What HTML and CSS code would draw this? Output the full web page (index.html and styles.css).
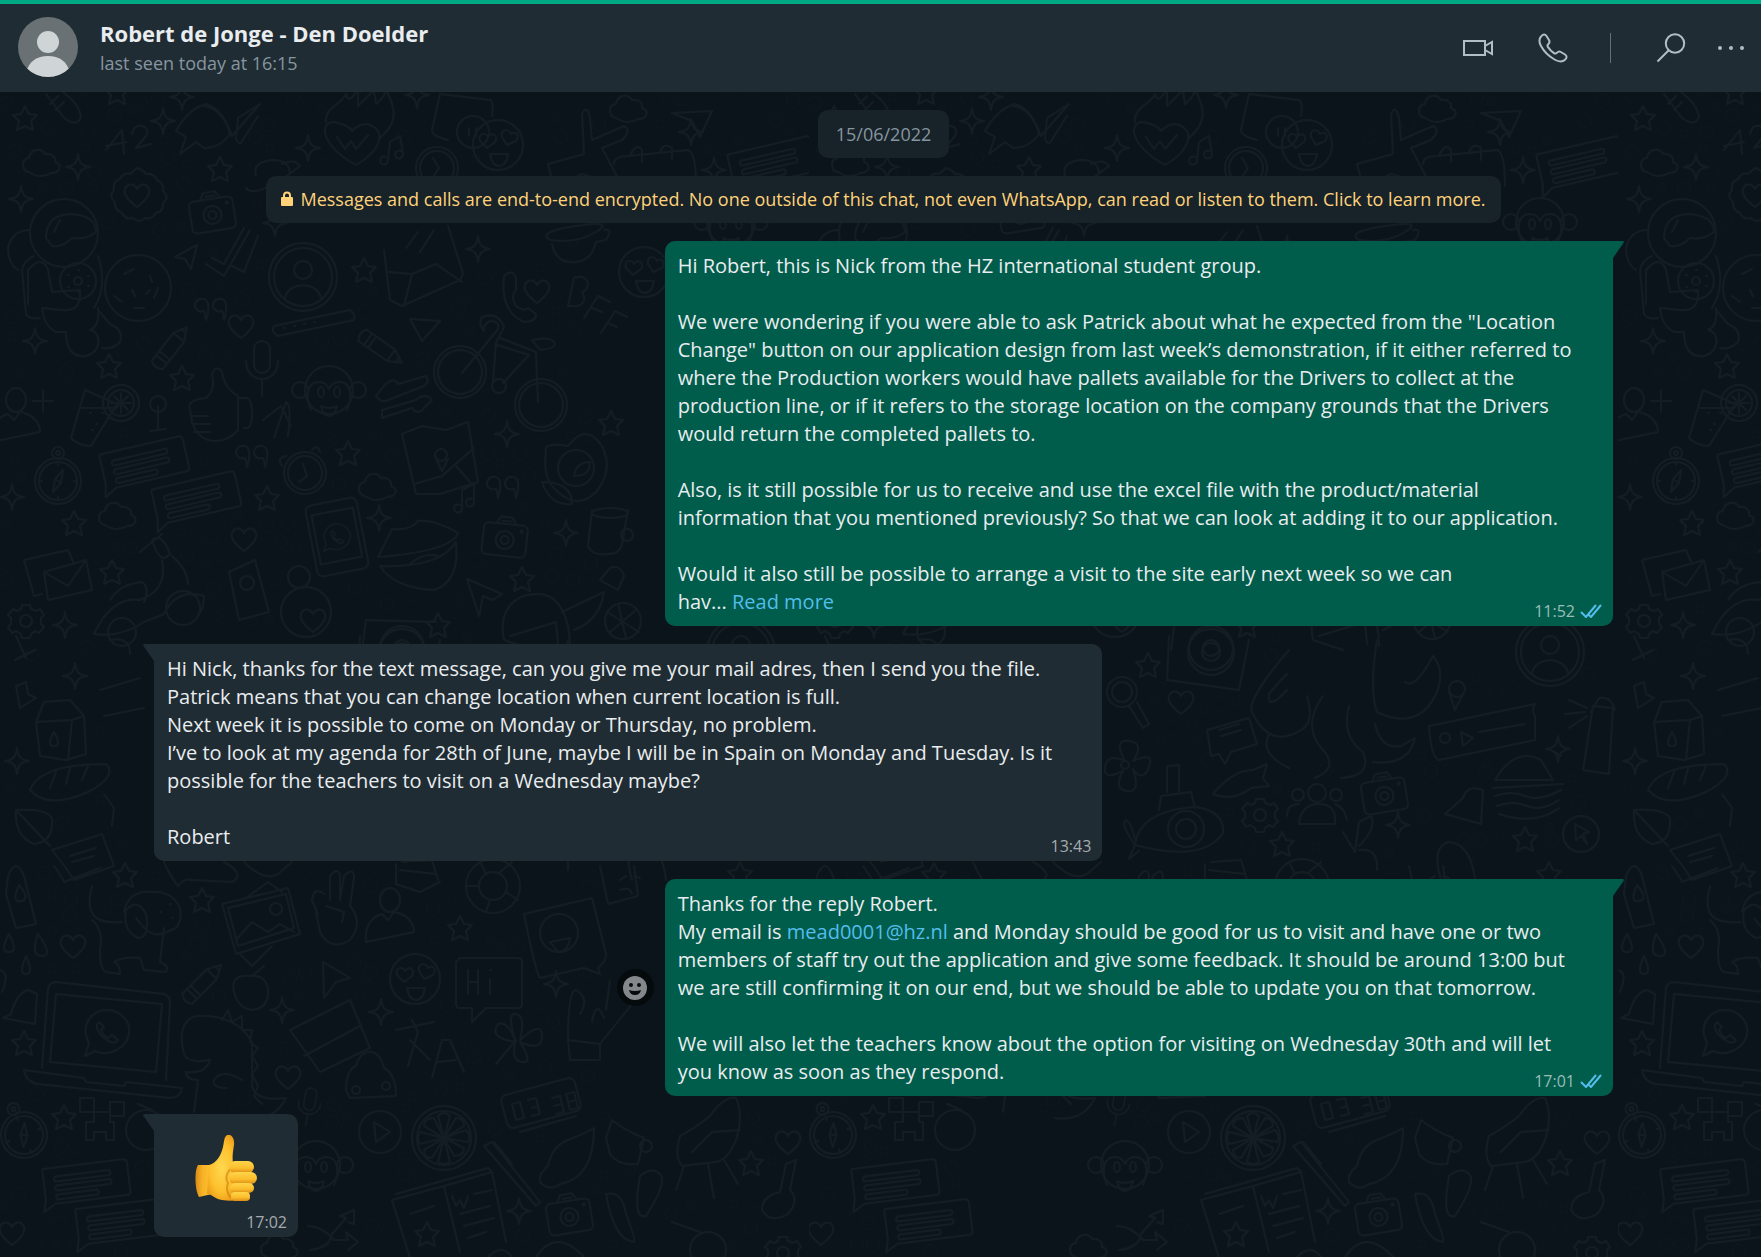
FILE: index.html
```html
<!DOCTYPE html>
<html lang="en">
<head>
<meta charset="utf-8">
<meta name="viewport" content="width=device-width, initial-scale=1">
<title>Robert de Jonge - Den Doelder</title>
<link rel="stylesheet" href="styles.css">
</head>
<body>
<div class="app">
  <header class="header">
    <svg class="avatar" viewBox="0 0 60 60" aria-hidden="true">
      <defs><clipPath id="avatar-clip"><circle cx="30" cy="30" r="30"/></clipPath></defs>
      <g clip-path="url(#avatar-clip)">
        <rect width="60" height="60" fill="#6a7175"/>
        <circle cx="30" cy="25" r="11" fill="#cfd4d6"/>
        <path d="M8 56C11 44 19 39 30 39s19 5 22 17v6H8z" fill="#cfd4d6"/>
      </g>
    </svg>
    <div class="contact">
      <h1 class="contact-name">Robert de Jonge - Den Doelder</h1>
      <p class="contact-status">last seen today at 16:15</p>
    </div>
    <div class="actions">
      <button class="action action-video" type="button" aria-label="Video call">
        <svg width="32" height="32" viewBox="0 0 32 32"><path d="M2 9h21v14H2zM23 14l7-4v12l-7-4"/></svg>
      </button>
      <button class="action action-phone" type="button" aria-label="Voice call">
        <svg width="32" height="32" viewBox="0 0 32 32"><path d="M4 4.500C6 2 8 1.800 9.500 4l2.600 4.200c.9 1.600.3 2.800-.9 4-1 1-.9 1.900 0 3.200 1.500 2.200 3.200 4 5.400 5.500 1.300.9 2.200 1 3.200 0 1.200-1.200 2.400-1.800 4-.9L28 22.500c2.200 1.500 2 3.500 0 5.300-2.500 2.300-6.500 2-10.500-.3C11.500 24 7 19.500 4 14 2 10.300 1.900 7 4 4.500z"/></svg>
      </button>
      <span class="divider"></span>
      <button class="action action-search" type="button" aria-label="Search">
        <svg width="32" height="32" viewBox="0 0 32 32"><circle cx="20" cy="11.500" r="9.200"/><path d="M13.500 18.500L2.500 29.500"/></svg>
      </button>
      <button class="action action-more" type="button" aria-label="More options">
        <svg width="32" height="32" viewBox="0 0 32 32"><g class="solid"><circle cx="5" cy="16" r="2"/><circle cx="16" cy="16" r="2"/><circle cx="27" cy="16" r="2"/></g></svg>
      </button>
    </div>
  </header>

  <main class="chat">
    <svg class="wallpaper" aria-hidden="true">
      <defs>
        <path id="star" d="M0-12L4-4l8 1-6 6 2 9-8-4-8 4 2-9-6-6 8-1z"/>
        <path id="spark" d="M0-13C1-4 4-1 12 0 4 1 1 4 0 13-1 4-4 1-12 0-4-1-1-4 0-13z"/>
        <path id="heart" d="M0 12C-8 6-14 0-12-6-10-12-3-12 0-6 3-12 10-12 12-6 14 0 8 6 0 12z"/>
        <path id="cloud" d="M-14 10c-8-2-8-13 0-14 1-9 12-11 16-4 8-1 11 4 10 8 8 3 5 11-4 11-6 4-14 4-22-1z"/>
        <g id="camera"><rect x="-22" y="-13" width="44" height="32" rx="5"/><path d="M-10-13l4-7H6l4 7M-4-16h9"/><circle cy="3" r="9"/><circle cy="3" r="4"/><circle cx="16" cy="-7" r="1"/></g>
        <g id="note"><path d="M-40-18h80q4 0 4 4v28q0 4-4 4h-72l-12 7 3-13v-26q0-4 1-4z"/><path d="M-29-9h54q3 2 0 5h-54q-3-2 0-5zM-29 0h54q3 2 0 5h-54q-3-2 0-5zM-29 9h40q3 2 0 5h-40q-3-2 0-5z"/></g>
        <path id="quote" d="M-4 9c-1-3 0-6-2-9-7 2-11-4-8-9s11-4 12 2-1 13-2 16zM14 9c-1-3 0-6-2-9-7 2-11-4-8-9s11-4 12 2-1 13-2 16z"/>
        <g id="profile"><circle r="34"/><circle r="29"/><circle cy="-7" r="9"/><path d="M-18 21C-14 4 14 4 18 21"/></g>
        <g id="gear"><circle r="6"/><path d="M-4-16h8l1 4 5 2 4-2 4 6-3 3v6l3 3-5 6-4-2-4 3-1 4h-8l-1-4-5-3-4 2-4-6 3-3v-6l-3-3 5-6 4 2 4-2z"/></g>
        <g id="compass"><circle r="23"/><circle r="19"/><circle cy="-28" r="6"/><circle cy="-28" r="2"/><path d="M5-11L3 2-5 11-3-2zM-3-2l6 4M0-19v3M0 16v3M-19 0h3M16 0h3"/></g>
        <g id="pencil"><path d="M-24-7h35l13 7-13 7h-35q-5-7 0-14zM-17-7v14M-12-7v14M11-7v14M19-3v6"/></g>
        <g id="monkey"><circle r="24"/><circle cx="-29" cy="0" r="8"/><circle cx="29" cy="0" r="8"/><path d="M-18 20c-6-14-4-28 8-28q7 0 10 7 3-7 10-7c12 0 14 14 8 28M-8 16q8 4 16 0-2 10-8 10t-8-10z"/><ellipse cx="-8" cy="2" rx="3" ry="5"/><ellipse cx="8" cy="2" rx="3" ry="5"/></g>
        <g id="person"><ellipse cy="-18" rx="10" ry="12"/><path d="M-24 24C-26 6-16-2-8-4l6 6 6-8C16-4 24 4 24 14z"/></g>
        <g id="love"><circle r="25"/><path d="M-18-4c-3-8 6-9 8-4 4-6 11-1 7 5l-8 6zM4-8c-2-8 7-9 9-3 5-4 9 2 5 7l-9 4zM-8 9h18q-2 12-9 12t-9-12z"/></g>
        <g id="logo"><path d="M-22 24l4-13C-28-8-14-22 0-22s24 12 22 24-18 24-34 17z"/><path d="M-8-10c-4 3-2 10 4 15s12 8 15 3l-6-5-4 3c-4-2-6-5-7-8l3-3z"/></g>
        <g id="mic"><rect x="-8" y="-26" width="16" height="32" rx="8"/><path d="M-16-6C-16 18 16 18 16-6M0 13v16"/></g>

        <pattern id="doodles" width="809" height="1180" patternUnits="userSpaceOnUse">
          <g class="doodle" transform="translate(0 -92)">
            <path id="small-rings" class="ring-small" d="M83 97h0M97 106h0M144 103h0M133 110h0M85 148h0M66 134h0M22 175h0M43 187h0M93 188h0M112 170h0M152 161h0M164 140h0M187 164h0M198 178h0M177 210h0M181 226h0M7 217h0M247 168h0M255 154h0M270 148h0M312 129h0M409 121h0M424 138h0M325 161h0M322 109h0M257 204h0M557 118h0M660 124h0M682 102h0M647 141h0M730 96h0M754 96h0M790 131h0M738 141h0M707 150h0M723 151h0M476 159h0M540 268h0M601 265h0M573 243h0M560 266h0M219 286h0M260 265h0M255 281h0M213 253h0M263 306h0M175 312h0M214 337h0M229 354h0M12 337h0M56 357h0M21 374h0M40 371h0M88 377h0M73 384h0M121 353h0M137 368h0M151 385h0M63 409h0M124 433h0M138 434h0M15 460h0M31 454h0M21 477h0M94 502h0M24 519h0M6 523h0M94 546h0M115 546h0M82 609h0M204 461h0M218 456h0M293 358h0M306 353h0M287 347h0M376 377h0M446 413h0M466 410h0M373 435h0M384 441h0M370 457h0M352 477h0M384 301h0M373 291h0M354 289h0M438 310h0M466 299h0M481 297h0M491 305h0M455 326h0M470 331h0M433 345h0M556 311h0M556 325h0M560 277h0M563 371h0M569 353h0M587 345h0M570 436h0M539 441h0M483 433h0M500 463h0M589 437h0M607 454h0M624 466h0M525 506h0M537 503h0M405 514h0M415 506h0M433 507h0M545 524h0M299 536h0M296 548h0M238 515h0M228 525h0M181 532h0M194 530h0M144 533h0M206 563h0M221 559h0M272 559h0M277 583h0M214 602h0M253 622h0M269 619h0M345 619h0M359 609h0M369 592h0M411 599h0M423 601h0M459 591h0M461 602h0M457 615h0M467 637h0M486 570h0M538 551h0M590 583h0M560 589h0M52 896h0M52 931h0M80 926h0M108 909h0M105 888h0M156 876h0M52 969h0M76 969h0M186 955h0M210 951h0M187 968h0M311 954h0M435 940h0M421 928h0M452 899h0M303 881h0M314 872h0M379 872h0M491 939h0M501 947h0M514 930h0M367 983h0M360 996h0M299 995h0M274 1032h0M285 1039h0M284 1051h0M334 1082h0M389 1048h0M451 1024h0M488 1027h0M468 1043h0M486 1041h0M535 993h0M541 1007h0M552 1049h0M510 1075h0M410 1080h0M412 1097h0M425 1096h0M460 1087h0M406 1108h0M486 1118h0M540 1138h0M552 1137h0M346 1117h0M403 1156h0M378 1175h0M418 1178h0M375 1210h0M384 1233h0M597 1190h0M604 1175h0M583 870h0M575 973h0M587 973h0M591 1095h0M605 1116h0M613 1244h0M235 1108h0M75 1151h0M90 1152h0M55 1159h0M25 1176h0M147 1184h0M5 1206h0M24 1213h0M39 1216h0M17 1082h0M56 1097h0M353 686h0M345 701h0M395 710h0M427 701h0M383 724h0M352 740h0M389 741h0M384 770h0M399 778h0M468 789h0M421 812h0M431 825h0M448 857h0M500 840h0M507 847h0M667 677h0M702 678h0M714 688h0M694 659h0M736 711h0M736 725h0M612 756h0M639 768h0M678 762h0M613 786h0M633 784h0M615 799h0M629 825h0M580 853h0M596 856h0M661 856h0M679 856h0M692 848h0M691 835h0M763 778h0M740 827h0M733 856h0M789 658h0M6 658h0M30 679h0M14 734h0M10 787h0M806 841h0M100 731h0M100 799h0M81 813h0M105 831h0M122 845h0M99 664h0M669 1129h0M758 1139h0M772 1161h0M753 1185h0M734 1204h0M755 1209h0M720 1219h0M691 1205h0M622 1174h0M632 1171h0M794 1225h0M731 1246h0"/>
            <use href="#small-rings" class="ring-small-hole"/>
            <path id="big-rings" class="ring-big" d="M6 103h0M114 115h0M158 98h0M47 129h0M88 132h0M14 151h0M94 173h0M66 188h0M183 183h0M168 158h0M268 125h0M293 98h0M255 137h0M403 137h0M108 222h0M159 230h0M668 98h0M599 124h0M561 137h0M776 121h0M793 101h0M485 278h0M188 290h0M242 299h0M12 317h0M143 343h0M206 354h0M66 371h0M322 342h0M340 339h0M365 312h0M422 359h0M330 440h0M391 456h0M339 484h0M458 310h0M489 415h0M488 454h0M520 454h0M574 330h0M529 475h0M586 417h0M130 548h0M211 537h0M187 555h0M267 526h0M288 522h0M281 542h0M355 587h0M387 604h0M475 560h0M556 554h0M552 576h0M573 580h0M591 563h0M6 579h0M86 647h0M214 588h0M222 616h0M44 873h0M71 899h0M69 915h0M117 900h0M202 926h0M197 943h0M371 886h0M433 909h0M518 946h0M354 962h0M305 972h0M290 978h0M370 972h0M219 997h0M447 1005h0M553 1022h0M474 1057h0M441 1090h0M545 1067h0M588 1076h0M495 1129h0M334 1105h0M332 1122h0M244 1099h0M62 1146h0M142 1167h0M19 1194h0M59 1223h0M37 1094h0M404 1174h0M372 1226h0M523 1235h0M589 887h0M48 1244h0M64 1245h0M121 1251h0M462 655h0M410 704h0M364 728h0M398 760h0M439 845h0M687 692h0M779 674h0M32 654h0M88 647h0M622 771h0M676 773h0M616 816h0M655 839h0M672 840h0M744 840h0M770 802h0M62 823h0M517 769h0M753 1118h0M671 1214h0M751 1228h0"/>
            <use href="#big-rings" class="ring-big-hole"/>

            <use href="#star" x="25" y="118"/><use href="#star" x="220" y="169"/><use href="#star" x="117" y="92"/><use href="#star" x="364" y="270"/><use href="#star" x="109" y="366"/><use href="#star" x="182" y="378"/><use href="#star" x="348" y="453"/><use href="#star" x="267" y="498"/><use href="#star" x="74" y="523"/><use href="#star" x="112" y="572"/><use href="#star" x="611" y="423"/><use href="#star" x="522" y="579"/><use href="#star" x="438" y="625"/><use href="#star" x="125" y="875"/><use href="#star" x="202" y="900"/><use href="#star" x="24" y="1043"/><use href="#star" x="64" y="1117"/><use href="#star" x="339" y="665"/><use href="#star" x="473" y="844"/><use href="#star" x="716" y="839"/><use href="#star" x="751" y="1163"/><use href="#star" x="740" y="874"/><use href="#star" x="427" y="1234"/><use href="#star" x="460" y="928"/>
            <use href="#spark" x="163" y="121"/><use href="#spark" x="182" y="97"/><use href="#spark" x="78" y="167"/><use href="#spark" x="21" y="199"/><use href="#spark" x="308" y="148"/><use href="#spark" x="275" y="223"/><use href="#spark" x="417" y="95"/><use href="#spark" x="35" y="341"/><use href="#spark" x="478" y="249"/><use href="#spark" x="507" y="434"/><use href="#spark" x="379" y="518"/><use href="#spark" x="566" y="533"/><use href="#spark" x="65" y="625"/><use href="#spark" x="12" y="497"/><use href="#spark" x="691" y="132"/><use href="#spark" x="714" y="170"/><use href="#spark" x="749" y="749"/><use href="#spark" x="17" y="761"/><use href="#spark" x="589" y="825"/><use href="#spark" x="75" y="676"/><use href="#spark" x="519" y="1211"/><use href="#spark" x="282" y="1010"/><use href="#spark" x="381" y="1012"/><use href="#spark" x="556" y="984"/>
            <use href="#heart" x="241" y="326"/><use href="#heart" x="244" y="539"/><use href="#heart" x="537" y="291"/><use href="#heart" x="73" y="946"/><use href="#heart" x="288" y="1077"/><use href="#heart" x="372" y="702"/><use href="#heart" x="788" y="1142"/><use href="#heart" x="12" y="1233"/><use href="#heart" x="137" y="195"/><use href="#heart" x="313" y="620"/>
            <use href="#cloud" x="43" y="162"/><use href="#cloud" x="630" y="108"/><use href="#cloud" x="379" y="486"/><use href="#cloud" x="119" y="515"/><use href="#cloud" x="281" y="1247"/>
            <use href="#gear" x="26" y="621"/><use href="#gear" x="451" y="815"/><use href="#gear" x="783" y="1253"/>
            <use href="#camera" transform="translate(212 212) rotate(-9)"/><use href="#camera" transform="translate(505 537) rotate(6)"/><use href="#camera" transform="translate(575 793) rotate(-9)"/><use href="#camera" transform="translate(569 1214) rotate(-9)"/>
            <use href="#note" transform="translate(143 463) rotate(-13)"/><use href="#note" transform="translate(195 498) rotate(-13)"/><use href="#note" transform="translate(85 1182) rotate(-7)"/><use href="#note" transform="translate(118 1222) rotate(-7)"/><use href="#note" transform="translate(771 163) rotate(-13)"/>
            <use href="#quote" x="210" y="311"/><use href="#quote" x="251" y="458"/><use href="#quote" x="502" y="489"/>
            <use href="#profile" x="303" y="277"/><use href="#profile" x="741" y="652"/>
            <use href="#compass" transform="translate(58 481)"/><use href="#compass" transform="translate(24 1135) rotate(-22)"/>
            <use href="#pencil" transform="translate(172 346) rotate(-52)"/><use href="#pencil" transform="translate(382 349) rotate(35)"/><use href="#pencil" transform="translate(204 982) rotate(-45)"/>
            <use href="#monkey" x="329" y="390"/><use href="#monkey" x="731" y="222"/><use href="#monkey" x="316" y="1165"/>
            <use href="#person" x="16" y="418"/><use href="#person" x="390" y="918"/>
            <use href="#love" x="498" y="145"/><use href="#love" x="644" y="272"/><use href="#love" x="415" y="979"/>
            <use href="#mic" x="262" y="367"/><use href="#mic" transform="translate(309 1106) rotate(10) scale(.7)"/>
            <use href="#logo" x="107" y="1032"/><use href="#logo" transform="translate(337 537) scale(.6)"/>

            <!-- hand, number, rocket -->
            <path d="M46 94l18 24q14 10 17-2-2-12-18-24M50 104l8-8M56 110l8-8M106 150l16-20 2 24M106 146l20-4M132 134q2-10 10-8t4 10l-10 12 15-4M180 154l6-17-10-6q12-22 30-27 18 6 24 30-10 14-26 14l-8-6zM204 106q18 2 28 30l28-32-22 14-2 20q3 10 8 0l14-22"/>
            <!-- heart badge -->
            <path d="M137 168q6 2 9 6 8-1 11 6 8 4 6 11 7 6 0 12 1 8-7 10-4 7-11 5-6 6-12 0-8 2-11-5-8-3-7-11-7-6-1-12-2-8 6-11 4-7 10-5z"/>
            <!-- burning heart -->
            <path d="M356 165c-40-22-36-48-18-42q10 2 14 8 14-14 26 0c6 12-8 26-22 34zM326 122c-2-14 16-18 20-28 2 8 6 6 12-6v18l16-16 2 14q8-6 10-14c12 22 10 34-6 48M337 137l8 12 6-8 5 8 12-14"/>
            <!-- astronaut and cookie -->
            <circle cx="64" cy="233" r="34"/><path d="M46 238q0-24 26-24 24 2 24 18-10 8-24 6-10 10-20 8zM54 232l6-12M34 256q-10 4-12 14l4 44q4 6 14 4M28 304v-34q14-16 20 0l4 22 28-2q2 22-18 20l-20-2q2 18 14 24h10q0 26 20 24c16-4 16-24 4-26q10-4 8-22M98 256q10 30-4 52M98 310l12 14q14 6 10 18-8 8-18 6M30 230q-18 0-22 18 0 16 10 22"/>
            <circle cx="78" cy="281" r="18"/><circle cx="78" cy="281" r="4"/><circle cx="138" cy="288" r="33"/><path d="M124 274l10-5M150 276l2 6M132 290l3 6M146 294l4-4M114 296l8 6M134 308h10M158 288l-4 10M68 275h1M78 270h1M88 276h1M88 286h1M78 292h1M68 287h1"/>
            <!-- paper planes and ticks -->
            <path d="M175 257l22-12-6 24-6-10zM206 264l18 12 26-46M212 258l12 6 20-36M232 266l12 6 14-36M410 319l30 2-18 20zM672 113l40-2-12 26-8-16zM467 579l35 15-9 6-10-4-4 20zM323 962l27 16-14 4-12 16z"/>
            <!-- planet, music, clock, calculator -->
            <path d="M256 176q-4-14 16-16 18 0 18 14M246 188q10 12 54-22-6-8-18-2M388 160l2-18 10-6 3 18M388 160a4 4 0 1 1-2-3M403 154a4 4 0 1 1-2-3M440 94l-8 36q0 6 16 10M440 94l50 6q4 2 2 16"/><circle cx="473" cy="132" r="16"/><path d="M469 128v8M476 128v8"/><circle cx="437" cy="168" r="21"/><circle cx="437" cy="168" r="17"/><path d="M433 158l6 10-6 9M462 508v-18l12-6v18M462 508a4 4 0 1 1-2-3M474 502a4 4 0 1 1-2-3M548 164l36-10-2-40q5-10 8 4l2 22 32-14q8 4-2 14l-20 8 20 38-40-12-28 14zM614 164q0-8 14-8l60-6q8 2 8 36M630 156q6-14 12-6v12M660 152q4-10 12-4v12"/>
            <!-- big envelope, mug, coffee -->
            <path d="M384 250l6 50 12 6 58-26q4-6 2-10l-14-44M388 272l24 2 24-10 26 18M412 274l-8 32M406 248l12-16M420 252l14-22M552 244q4 20 24 18 16-2 20-20l10-2q8-12-2-10M550 240q26 4 46-8t-20-6-26 14zM592 510l-4 36q4 10 20 8 12 0 14-10l6-34"/><ellipse cx="610" cy="513" rx="18" ry="5"/><circle cx="627" cy="535" r="6"/>
            <path d="M274 326l76-16q6 4 4 10l-76 16q-8-4-4-10zM284 328h1M294 326h1M304 324h1M314 322h1"/>
            <!-- handset and BFF -->
            <path d="M504 276q8-8 12 2v12q-6 6 0 16 8 6 12 2l8 6q0 8-12 8c-20-8-22-30-20-46zM568 306l6-28q12-4 14 6 0 6-6 8 6 10-4 14zM584 318l14-22 12 6M592 308l10 4M601 333l14-22 12 6M608 323l9 4"/>
            <!-- bicycle -->
            <circle cx="460" cy="372" r="26"/><circle cx="460" cy="372" r="22"/><circle cx="541" cy="405" r="26"/><circle cx="541" cy="405" r="22"/><circle cx="499" cy="386" r="7"/><path d="M462 373l36-44q2-8-8-8-8 4-6 10-6-6-2-14 16-6 22 10l-8 16-3 38M497 345l32 10-26 28M500 338l36 14 2 50M532 340q18-4 22 2t-14 8z"/>
            <!-- thumb, drink, spanner arms -->
            <path d="M190 410q-4-10 16-12 10-8 6-24 4-10 10-2 2 16 16 24v34q-12 14-30 10-12-4-16-18zM238 398h8q6 0 6 16t-8 14M192 416h16M192 424h18M194 432h16M85 390l-14 48q8 8 20 8l26-42zM80 408h36M90 413h1M102 413h1M96 424h1M92 430h1"/><circle cx="121" cy="403" r="18"/><circle cx="121" cy="403" r="13"/><path d="M111 403h20M121 393v20M114 396l14 14M128 396l-14 14M43 390v22M33 401h20M158 406v22M150 431l16-2"/><circle cx="158" cy="404" r="8"/>
            <path d="M376 396q6 8 12 4l36-14q6-4 2-10l-28 8q-4-8-14 2zM382 418l30-10q6 8 12 0l8-8q-6-8-16 0l-34 10zM274 438l12-36q6 2 2 34M263 420l18-14 10 20"/>
            <!-- map, rose, watch -->
            <path d="M402 434l20-8 24 4 22-8 10 60-38 12-24 0zM414 484l28-8 32-28M456 466l14 16"/><circle cx="441" cy="455" r="6"/><path d="M436 459l6 12 6-12M546 452q-4 28 12 40 20 18 38 0 18-22 6-46-16-24-34 0-26-4-22 6zM542 482q30 0 30 22-22 2-30-22z"/><circle cx="576" cy="468" r="18"/><path d="M574 476q2-14 16-14 0 14-16 14"/><circle cx="305" cy="473" r="21"/><circle cx="305" cy="473" r="17"/><path d="M303 464l4 12-8 6M282 466q-6-8 4-10M312 450q6-6 8 2"/>
            <!-- phone, lips, envelopes -->
            <rect x="-26" y="-36" width="52" height="72" rx="6" transform="translate(337 537) rotate(-11)"/><rect x="-21" y="-26" width="42" height="50" transform="translate(337 537) rotate(-11)"/><path d="M378 557l14-28q18 2 26-8 16-2 40 12-6 18-80 24zM380 566q60 2 76-24 4 40-22 48-40-2-54-24M410 564q14-12 28-8M24 560l44-10 6 14M24 560l10 36 8-2M44 572l42-12 6 30-44 10zM44 572l24 14 18-26"/>
            <!-- scooter, card, love bubble -->
            <path d="M140 552l22-18M152 540q10-8 18 14-10 12-18-14M162 560q6 30-22 40-28-4-46 34 26 4 50-12l20-8q12-26 40-18 0 14-6 18M172 556q16 14 16 28M110 600q10-16 32-18 8 6 2 20M229 572l26-12 14 52-30 8z"/><circle cx="122" cy="632" r="14"/><circle cx="183" cy="608" r="17"/><circle cx="306" cy="612" r="25"/><circle cx="299" cy="577" r="11"/><circle cx="247" cy="583" r="7"/>
            <path d="M362 650l4-30 70 2M534 650l-30-10c-6-30 10-46 34-46s32 30 32 52M510 636l46-14 2 22M562 612l42-20q-4 28-30 38"/><circle cx="402" cy="648" r="22"/><circle cx="402" cy="648" r="8"/><circle cx="623" cy="621" r="18"/><path d="M607 612l32 20M610 632l26-22M618 604l8 34M15 660l20-10M600 580l10-12q10-4 14 8l-6 14z"/>

            <!-- record player, octopus, voice note -->
            <path d="M360 636l-2 44 72 10 10-50"/><circle cx="402" cy="652" r="23"/><circle cx="402" cy="652" r="9"/><circle cx="313" cy="692" r="15"/><circle cx="313" cy="692" r="10"/><path d="M320 706l14 22 6-4-12-22M480 650q-38 44-38 60 18 40 50 20 14-8 6-34M478 690q-20 22-18 4 10-12 18-20M460 734q-10 20 20 34M514 696q-22 30 0 54 16 18-8 28M540 706q-8 30 14 46 10 24-22 26M568 640q-8 50 0 72 42 20 60-20 8-22-4-36-18 34-28 26M566 724q6 26 26 22l14-8q-6 28-42 24M398 730l42-12 8 26-26 8-6 12-6-10-8 2zM410 730l20-6M412 736l20-6M620 726l106-22q-4 6 0 12v24l-96 20q-8-2-10-34zM652 732l12 6-10 8zM670 732l46-8"/><circle cx="636" cy="738" r="5"/><circle cx="648" cy="689" r="8"/><path d="M640 692l6 18 8-16"/>
            <!-- flower, submarine, fish -->
            <circle cx="316" cy="765" r="4"/><path d="M316 761q-12-22 4-20t4 20q22-10 16 6t-16 2q8 24-6 22t-4-20q-20 10-18-4t20-6M326 845q4-34 60-38 30 4 28 26-20 30-88 12zM350 810l2-14 30-4 4 16M358 792v-26l12-1v26M404 794q20-24 40-24l14-6-4 14 6 8-18 2q-18 14-38 6zM326 845q-14-20-10-24t10 18M326 845l-6 14 10-8"/><circle cx="377" cy="829" r="18"/><circle cx="377" cy="829" r="10"/>
            <!-- group, bell, burger, lighthouse -->
            <circle cx="508" cy="793" r="9"/><circle cx="489" cy="795" r="6"/><circle cx="527" cy="795" r="6"/><path d="M490 824q2-20 20-20t16 20zM478 816q0-12 12-12M538 820q-2-12-12-16M534 832l12 20 4-30 12-6q6 12-12 30M550 850q20-2 18 20M636 814l18-16q4-14 20-8l-2 34zM686 780q20-34 46-20l12 20zM684 788l70-4M686 796q16-6 30 0t36-6M688 806q16-6 30 0t32-6M690 814q36 12 60-6M774 770l10-64 20 2-4 66zM782 712l8-14q12-2 16 12M760 700l18 8M756 714l20-2M760 728l18-12M746 752l6 4"/><circle cx="772" cy="834" r="18"/><path d="M766 824l14 8-6 2 4 10-6-8-5 4z"/>
            <!-- milk, bread, leaf, bottle, message -->
            <path d="M36 722l8-20 26-2 14 16 2 38-20 6-26-4zM36 722l36-2 12-4M72 720l-4 40M54 732q-8 14 0 14t0-14M30 790q10-26 76-26 12 12-18 28-40 18-58-2zM50 788l6-16M66 784l4-16M82 780l6-14M16 810q30-2 36 8 2 24-18 26-20-8-18-34zM16 810l34 36M52 850l50-16 12 32-40 14-8-12zM70 856l26-8M72 862l22-6M8 876q8-20 16 0l12 48-20 4-10-34zM19 885q-8 18 2 16t-2-16M100 690l40-12M104 716l40-8M16 686l10-4 2 12 8 4-16 10zM104 794l10 14-2 18M632 880q-10-34 8-38 22 2 26 38M402 862l30-2 6 20M16 636l10 22"/>
            <!-- drops, dog -->
            <path d="M9 934q-10 18 0 18t0-18M38 934q-8 22 4 22t-4-22M26 956q-8 18 0 18t0-18M92 886c-8 30 4 38 30 36M92 920q12 10 8 30 0 20 6 22l14 2q0-10-6-12 10-6 26-4l4 12 22 2q4-6-6-10l4-34M124 912q4-22 28-20c24-2 36 20 24 36-18 8-24 12-40-10M126 910q12-12 20 4 4 24-8 24-16-8-12-28zM160 912h1M170 904h1M172 918h1"/>
            <!-- photo, peace hand, life ring -->
            <path d="M222 904l66-16 12 46-64 20zM228 908l58-14 8 34-56 18zM236 940l16-18 16 10 12-8 14 8M240 954l12 12 20-20M246 898l22-16 14 10"/><circle cx="276" cy="909" r="6"/><path d="M318 914l-6-14q2-14 12-6M330 900v-24q8-10 10 0v24l4-24q10-10 10 2l-4 28q14 16 0 34-20 12-30-8l-4-20M326 906l18 6-2 10"/><circle cx="493" cy="886" r="27"/><circle cx="493" cy="886" r="14"/><path d="M480 862l6 12M500 872l12-10M506 892l12 8M490 900l-4 12M466 886h12"/>
            <path d="M524 914l68-16 14 56q0 8-8 14l2 6-16-6-44 10q-4-4-16-64z"/><circle cx="559" cy="933" r="19"/><path d="M550 942l20-4q-2 14-12 14zM456 962l4-4h58q4 0 4 4v42q0 4-4 4h-32l-14 14v-14h-12q-4 0-4-4zM468 970v24M478 970v24M468 982h10M490 979v15M490 970h1"/>
            <!-- laptop -->
            <path d="M42 1068l6-80q2-6 8-6l108 12q6 2 6 8l-4 78M50 1062l6-68 106 10-6 68zM24 1070l60 8 2 4 38 4 2-4 56 6q-2 10-12 10l-132-14q-12-2-14-14zM3 1018l8-4q6-22 18-24l8 4-2 30zM0 970q10 2 2 22"/>
            <!-- dinosaur, apple, map, car -->
            <path d="M184 1054q-8-32 12-38 40-2 56 26v44q4 16 34 12-12 24-40 20M184 1054q4 10 26 6-4 14-24 12 0 8 12 8l-4 32M242 1080q-20-12-28 0-2 8 12 8M222 1020l6-10 4 12 10-6v14l10 0-2 12 8 6-6 8 6 10-6 8 6 12-4 10 8 8M250 976q-20-2-16 16 4 16 18 18 18-2 16-22-4-14-18-12zM252 976l12-10M290 1030l60-30 20 48-50 24zM304 1056l56-30M346 1090q0-20 10-24 4-14 14-14t14 16q12 6 12 28l-46 2z"/><circle cx="356" cy="1090" r="4"/><circle cx="386" cy="1086" r="4"/>
            <path d="M396 1030l38-8M412 1020l6 12-10 34M410 1040l20 20M432 1078l10-38 8 0 14 32M438 1062l18-2M516 1042q-28-4-18-18 10-4 18 18-10-30 0-28t4 26q22-20 22-4t-22 6q14 22 2 20t-6-22l-20 24M568 1040q0-50 8-50 14 8 4 24M568 1040l32 4v16h-30zM600 1044l40-50M592 1022q4-24 12-4M606 1010l4-30"/>
            <!-- alarm clock, orange, play -->
            <rect x="-38" y="-17" width="76" height="34" rx="6" transform="translate(541 1103) rotate(-15)"/><path d="M512 1104l8-2 4 16-8 2zM528 1100l8-2 4 16-8 2M532 1108l6-2M552 1098l8-2 4 16-8 2M554 1106l8-2M566 1094l8-2 4 16-8 2zM568 1102l8-2M520 1132l56-16"/><circle cx="444" cy="1138" r="32"/><circle cx="444" cy="1138" r="27"/><path d="M444 1138l-6-22q6-6 12 0zM444 1138l12-20q8 0 8 8zM444 1138l22-8q6 6 2 12zM444 1138l20 10q0 8-10 8zM444 1138l6 24q-6 4-12 0zM444 1138l-12 20q-8 0-8-8zM444 1138l-24 6q-4-6 0-12zM444 1138l-20-12q0-8 10-8z"/><circle cx="380" cy="1132" r="21"/><path d="M374 1122l16 10-14 10z"/>
            <path d="M80 1098h14v14H80zM110 1102h14v14h-14zM94 1112h16v10h4v18h-8v-8h-12v8h-8v-18h8zM138 1104l14 6"/><circle cx="146" cy="1130" r="20"/>
            <!-- book, brush, croissant, mug -->
            <path d="M392 1200l52-14 48-14 14 70M392 1200l18 58M444 1186l16 66M492 1172l-4-4-92 26M410 1214l24-8M452 1196l4 10 4-6 4 8 4-12M474 1194l18-4M460 1214l30-8M464 1226l30-8M468 1238l18-6M484 1146l8-4 48 60-4 4zM494 1142l18 22M540 1182q-2-8 8-16 4-20 20-26 20-8 26-12 0 50-34 56-10 8-20-2zM612 1120q12 10 32 18l-6 26q-20 2-28-10l-4-16z"/><circle cx="646" cy="1146" r="6"/>
            <path d="M310 1250q20-2 22-16l14-16-6-2 14-6v14l-6-2M308 1226q14 0 26 14h14l-2-8 12 10-10 8M606 1194q16-4 20 20 10 26 8 28-20-2-28-48zM640 1176q12-10 20-2t-14 42q-14 4-6-40z"/>
            <!-- chair, guitar, glass -->
            <path d="M680 1136q18-10 30-20 14-20 26-18c10 20 0 60-20 64l-34 4q-8-10-2-30zM692 1152l20-20 28-2M684 1166l-8 24M708 1164l6 34M724 1160l14 24M786 1164l10-4-6 30q10 10-2 24-18 10-26-4 0-14 18-18z"/><circle cx="708" cy="1250" r="18"/><path d="M672 1222l28 10M536 1257q20-30 48 0M488 1257q14-14 24 0M110 640q20-4 20 14"/>
            <path d="M164 862q6 14 14 24 6-8 14-6l40 2q14-8-8-20M400 870l36 4M54 866q10 14 10 16l36-14M244 862q20 20 34 12l14-12M396 864v20l24 8 20-10M600 866l8 38 30-8-4-30M620 880l6-4M634 876l6 2M620 890q10-4 12 4"/>
          </g>
        </pattern>
      </defs>
      <rect width="100%" height="100%" fill="url(#doodles)"/>
    </svg>

    <div class="messages">
      <time class="chip chip-date" datetime="2022-06-15">15/06/2022</time>
      <button class="chip chip-notice" type="button">
        <svg class="lock" width="12" height="16" viewBox="0 0 12 16" aria-hidden="true"><path d="M3 7V4.500a3 3 0 0 1 6 0V7" fill="none" stroke="currentColor" stroke-width="2"/><rect y="6" width="12" height="9" rx="1" fill="currentColor"/></svg>
        <span>Messages and calls are end-to-end encrypted. No one outside of this chat, not even WhatsApp, can read or listen to them. Click to learn more.</span>
      </button>

      <article class="row row-out">
        <div class="bubble bubble-out">
          <svg class="tail" viewBox="0 0 11 17" aria-hidden="true"><path d="M0 0h9.500q2 0 1 2L0 17z"/></svg>
          <p class="text">Hi Robert, this is Nick from the HZ international student group.<br><br>We were wondering if you were able to ask Patrick about what he expected from the "Location<br>Change" button on our application design from last week’s demonstration, if it either referred to<br>where the Production workers would have pallets available for the Drivers to collect at the<br>production line, or if it refers to the storage location on the company grounds that the Drivers<br>would return the completed pallets to.<br><br>Also, is it still possible for us to receive and use the excel file with the product/material<br>information that you mentioned previously? So that we can look at adding it to our application.<br><br>Would it also still be possible to arrange a visit to the site early next week so we can<br>hav... <a class="link" href="#more">Read more</a></p>
          <div class="meta"><time>11:52</time><svg class="ticks" viewBox="0 0 22 14" aria-label="Read"><path d="M1 8l5 5L16 1M9 11l2 2L21 1"/></svg></div>
        </div>
      </article>

      <article class="row">
        <div class="bubble bubble-in">
          <svg class="tail" viewBox="0 0 11 17" aria-hidden="true"><path d="M11 0H1.500q-2 0-1 2L11 17z"/></svg>
          <p class="text">Hi Nick, thanks for the text message, can you give me your mail adres, then I send you the file.<br>Patrick means that you can change location when current location is full.<br>Next week it is possible to come on Monday or Thursday, no problem.<br>I’ve to look at my agenda for 28th of June, maybe I will be in Spain on Monday and Tuesday. Is it<br>possible for the teachers to visit on a Wednesday maybe?<br><br>Robert</p>
          <div class="meta"><time>13:43</time></div>
        </div>
      </article>

      <article class="row row-out">
        <button class="react" type="button" aria-label="React">
          <svg width="24" height="24" viewBox="0 0 24 24"><circle cx="12" cy="12" r="12" fill="#84888b"/><g fill="#050a0d"><circle cx="8" cy="9" r="2"/><circle cx="16" cy="9" r="2"/><path d="M6 14q6 2 12 0-1 5-6 5t-6-5z"/></g></svg>
        </button>
        <div class="bubble bubble-out">
          <svg class="tail" viewBox="0 0 11 17" aria-hidden="true"><path d="M0 0h9.500q2 0 1 2L0 17z"/></svg>
          <p class="text">Thanks for the reply Robert.<br>My email is <a class="link" href="mailto:mead0001@hz.nl">mead0001@hz.nl</a> and Monday should be good for us to visit and have one or two<br>members of staff try out the application and give some feedback. It should be around 13:00 but<br>we are still confirming it on our end, but we should be able to update you on that tomorrow.<br><br>We will also let the teachers know about the option for visiting on Wednesday 30th and will let<br>you know as soon as they respond.</p>
          <div class="meta"><time>17:01</time><svg class="ticks" viewBox="0 0 22 14" aria-label="Read"><path d="M1 8l5 5L16 1M9 11l2 2L21 1"/></svg></div>
        </div>
      </article>

      <article class="row">
        <div class="bubble bubble-in bubble-emoji">
          <svg class="tail" viewBox="0 0 11 17" aria-hidden="true"><path d="M11 0H1.500q-2 0-1 2L11 17z"/></svg>
          <svg class="thumb" width="62" height="66" viewBox="0 0 62 66" role="img" aria-label="Thumbs up">
            <defs>
              <radialGradient id="palm" cx=".45" cy=".5" r=".6"><stop offset="0" stop-color="#ffd84f"/><stop offset=".6" stop-color="#fdc02d"/><stop offset="1" stop-color="#e99513"/></radialGradient>
              <linearGradient id="wrist"><stop offset="0" stop-color="#d98a15"/><stop offset=".4" stop-color="#f6b126"/><stop offset="1" stop-color="#fdc530"/></linearGradient>
              <linearGradient id="finger" x2="0" y2="1"><stop offset="0" stop-color="#ffd54a"/><stop offset=".6" stop-color="#fbbd2c"/><stop offset="1" stop-color="#dc8c16"/></linearGradient>
            </defs>
            <path d="M3 30h14v29l-13 3C0 56-1 36 3 30z" fill="url(#wrist)"/>
            <path d="M14 30c8-2 12-10 14-18 1-5 1-9 3-11 3-3 9 0 8 9-1 7-2 12-1 18l7 8v28q-6 3-18 1C20 64 17 59 12 59z" fill="url(#palm)"/>
            <path d="M35 34q-6 8-2 14-3 8 3 15" fill="none" stroke="#c97c10" stroke-opacity=".6" stroke-width="2"/>
            <rect x="34" y="26" width="25" height="12" rx="6" fill="url(#finger)"/>
            <rect x="34" y="37" width="28" height="12" rx="6" fill="url(#finger)"/>
            <rect x="35" y="48" width="24" height="10" rx="5" fill="url(#finger)"/>
            <rect x="36" y="57" width="19" height="9" rx="4" fill="url(#finger)"/>
          </svg>
          <div class="meta"><time>17:02</time></div>
        </div>
      </article>
    </div>
  </main>
</div>
</body>
</html>
```

FILE: styles.css
```css
* {
  box-sizing: border-box;
}

body {
  margin: 0;
  background: #0b141a;
  color: #e9edef;
  font-family: "Open Sans", "Noto Sans", sans-serif;
}

h1,
p {
  margin: 0;
}

button {
  border: 0;
  margin: 0;
  padding: 0;
  background: none;
  color: inherit;
  font: inherit;
  cursor: pointer;
}

svg {
  display: block;
}

.app {
  display: flex;
  flex-direction: column;
  min-height: 100vh;
}

/* Header */

.header {
  display: flex;
  align-items: center;
  padding: 0 14px 2px 18px;
  height: 92px;
  border-top: 4px solid #00a884;
  background: #202c33;
}

.avatar {
  width: 60px;
  height: 60px;
  flex: none;
}

.contact {
  flex: 1;
  padding-left: 22px;
}

.contact-name {
  font-size: 22px;
  line-height: 32px;
  font-weight: 700;
}

.contact-status {
  color: #8696a0;
  font-size: 18px;
  line-height: 28px;
}

.actions {
  display: flex;
  align-items: center;
  padding-top: 2px;
}

.action svg {
  fill: none;
  stroke: #b1bec6;
  stroke-width: 2;
}

.action .solid {
  fill: #b1bec6;
  stroke: none;
}

.action-phone {
  margin-left: 43px;
}

.divider {
  width: 1px;
  height: 30px;
  margin: 0 44px 0 41px;
  background: #62707a;
}

.action-more {
  margin-left: 28px;
}

/* Wallpaper */

.chat {
  position: relative;
  flex: 1;
}

.wallpaper {
  position: absolute;
  inset: 0;
  width: 100%;
  height: 100%;
}

.doodle {
  fill: none;
  stroke: #141d23;
  stroke-width: 2;
  stroke-linecap: round;
  stroke-linejoin: round;
}

.ring-small {
  stroke-width: 8;
}

.ring-small-hole {
  stroke: #0b141a;
}

.ring-big {
  stroke-width: 13;
}

.ring-big-hole {
  stroke: #0b141a;
}

/* Messages */

.messages {
  position: relative;
  display: flex;
  flex-direction: column;
  gap: 18px;
  padding: 18px 148px 20px 154px;
}

.chip {
  display: flex;
  align-items: center;
  align-self: center;
  gap: 7px;
  padding: 10px 18px;
  border-radius: 10px;
  background: #182229;
  font-size: 18px;
  line-height: 28px;
}

.chip-date {
  color: #8696a0;
}

.chip-notice {
  padding: 9px 15px 10px;
  color: #ffd279;
}

.lock {
  flex: none;
}

.row {
  display: flex;
  align-items: center;
  gap: 11px;
}

.row-out {
  justify-content: flex-end;
}

.bubble {
  position: relative;
  width: 65%;
  padding: 11px 13px 10px;
  border-radius: 10px;
}

.bubble-in {
  border-top-left-radius: 0;
  background: #202c33;
}

.bubble-out {
  border-top-right-radius: 0;
  background: #005c4b;
}

.text {
  font-size: 20px;
  line-height: 28px;
  white-space: nowrap;
}

.link {
  color: #53bdeb;
  text-decoration: none;
}

.tail {
  position: absolute;
  top: 0;
  width: 11px;
  height: 17px;
}

.bubble-in .tail {
  left: -11px;
  fill: #202c33;
}

.bubble-out .tail {
  right: -11px;
  fill: #005c4b;
}

.meta {
  position: absolute;
  right: 11px;
  bottom: 4px;
  display: flex;
  align-items: center;
  gap: 5px;
  color: #a5abae;
  font-size: 16px;
  line-height: 22px;
}

.bubble-out .meta {
  color: #99beb7;
}

.ticks {
  width: 22px;
  height: 14px;
  fill: none;
  stroke: #53bdeb;
  stroke-width: 2;
}

.bubble-emoji {
  width: auto;
  padding: 21px 41px 36px;
}

.react {
  display: grid;
  place-items: center;
  width: 37px;
  height: 37px;
  border-radius: 50%;
  background: #050a0d;
}
```
